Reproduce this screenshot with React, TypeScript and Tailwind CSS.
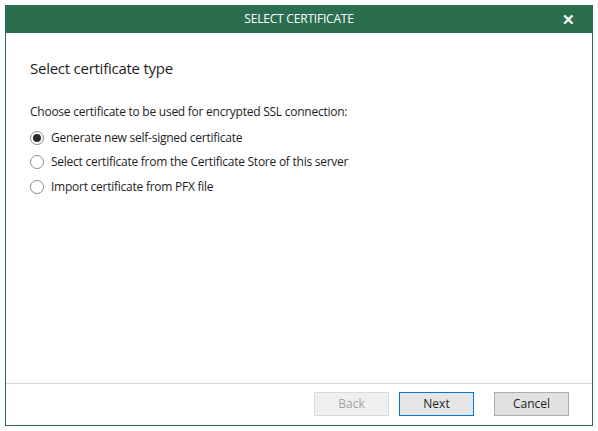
import React, { useState } from "react";

const options = [
  "Generate new self-signed certificate",
  "Select certificate from the Certificate Store of this server",
  "Import certificate from PFX file",
];

function Radio({ checked }: { checked: boolean }) {
  return (
    <span className="flex h-[14px] w-[14px] items-center justify-center rounded-full border border-[#8c8c8c] bg-white">
      {checked && <span className="h-[8px] w-[8px] rounded-full bg-[#2b2b2b]" />}
    </span>
  );
}

export default function App() {
  const [selected, setSelected] = useState(0);

  return (
    <div className="h-[431px] w-[598px] bg-white p-[5px] font-['Open_Sans','Noto_Sans',sans-serif] text-[#1e1e1e]">
      <div className="flex h-[421px] w-[588px] flex-col border border-t-0 border-[#2a6e4f]">
        {/* Title bar */}
        <div className="relative flex h-[28px] shrink-0 items-center justify-center bg-[#2a6e4f] text-[12px] tracking-[-0.2px] text-white">
          <span>SELECT CERTIFICATE</span>
          <span className="absolute right-[17px] top-[7px] text-[15px] font-bold leading-none">✕</span>
        </div>

        {/* Body */}
        <div className="flex-1 px-[24px] pt-[25px] tracking-[-0.25px]">
          <h1 className="text-[15px] leading-[20px]">Select certificate type</h1>
          <p className="mt-[26px] text-[12px] leading-[16px]">
            Choose certificate to be used for encrypted SSL connection:
          </p>
          <div className="mt-[9px] flex flex-col gap-[7.5px]">
            {options.map((label, i) => (
              <label
                key={label}
                className="flex h-[17px] cursor-default items-center gap-[7px] text-[12px]"
                onClick={() => setSelected(i)}
              >
                <Radio checked={selected === i} />
                <span>{label}</span>
              </label>
            ))}
          </div>
        </div>

        {/* Footer */}
        <div className="flex h-[42px] shrink-0 items-start justify-end border-t border-[#d6d6d6] pr-[23px] pt-[8px] text-[12px]">
          <button className="h-[24px] w-[75px] border border-[#dadada] bg-[#efefef] text-[#a3a3a3]">Back</button>
          <button className="ml-[10px] h-[24px] w-[75px] border border-[#0078d7] bg-[#e5e5e5]">Next</button>
          <button className="ml-[20px] h-[24px] w-[75px] border border-[#adadad] bg-[#e1e1e1]">Cancel</button>
        </div>
      </div>
    </div>
  );
}
